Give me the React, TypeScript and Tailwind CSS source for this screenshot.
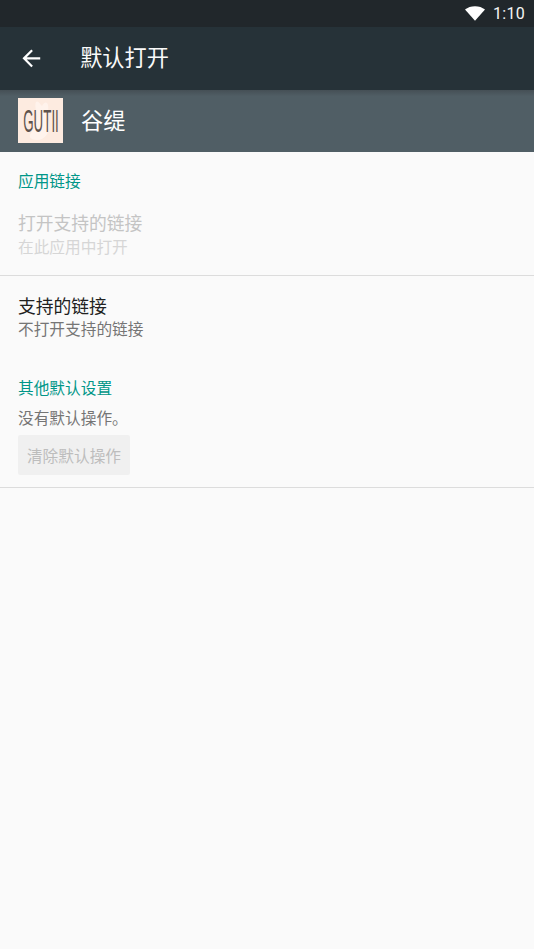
const FONT = "font-['Roboto','Noto_Sans_CJK_SC',sans-serif]";

function Wifi() {
  return (
    <svg width="20" height="15" viewBox="0 0 22 16" className="mr-2">
      <path d="M0 3.6C3 1.3 6.8 0 11 0s8 1.3 11 3.6L11 16z" fill="#fff" />
    </svg>
  );
}

function AppIcon() {
  return (
    <div className="relative flex h-[45px] w-[45px] items-center justify-center overflow-hidden bg-[#fdebe0]">
      <svg width="45" height="45" viewBox="0 0 45 45" className="absolute inset-0">
        <path d="M18 4c2-2 4 2 6 4 2-4 5-5 6-1 1 5-1 12 1 20 1 7-4 15-12 15-6 0-9-3-6-7 3-5 6-8 6-14 0-7-3-13-1-17z" fill="#fff3ec" />
      </svg>
      <span className="relative scale-x-[0.89] scale-y-[2.15] font-['Liberation_Sans',sans-serif] text-[15px] leading-[11px] whitespace-nowrap text-[#5f534c]">
        GUTII
      </span>
    </div>
  );
}

export default function App() {
  return (
    <div className={`${FONT} flex h-[949px] w-[534px] flex-col overflow-hidden bg-[#fafafa]`}>
      <div className="flex h-[27px] items-center justify-end bg-[#21272b]">
        <Wifi />
        <span className="mr-[9px] text-[16px] tracking-[0.3px] text-[#f5f5f5]">1:10</span>
      </div>
      <header className="flex h-[63px] items-center bg-[#263238]">
        <svg width="26.67" height="26.67" viewBox="0 0 24 24" className="ml-[17.5px]" fill="#fff">
          <path d="M20 11H7.83l5.59-5.59L12 4l-8 8 8 8 1.41-1.41L7.83 13H20z" />
        </svg>
        <h1 className="ml-9 text-[22.2px] leading-none text-[#fafafa]">默认打开</h1>
      </header>
      <div className="flex h-[62px] items-center bg-gradient-to-b from-[#454f55] from-0% via-[#505e65] via-10% to-[#505e65] pl-[18px]">
        <div className="mb-[2px]">
          <AppIcon />
        </div>
        <span className="ml-[18px] text-[22.2px] leading-none text-white">谷缇</span>
      </div>
      <section className="border-b border-[#dcdcdc] px-[18px] pb-[17px]">
        <h2 className="pt-5 text-[15.7px] leading-[20px] text-[#009688]">应用链接</h2>
        <p className="mt-[21px] text-[17.77px] leading-[22px] text-[#c4c4c4]">打开支持的链接</p>
        <p className="mt-[3px] text-[15.7px] leading-[20px] text-[#d6d6d6]">在此应用中打开</p>
      </section>
      <section className="px-[18px] pt-5">
        <p className="text-[17.77px] leading-[22px] text-[#212121]">支持的链接</p>
        <p className="mt-[2px] text-[15.7px] leading-[20px] text-[#757575]">不打开支持的链接</p>
      </section>
      <section className="border-b border-[#dcdcdc] px-[18px] pb-3">
        <h2 className="mt-[39px] text-[15.7px] leading-[20px] text-[#009688]">其他默认设置</h2>
        <p className="mt-[10px] text-[15.7px] leading-[20px] text-[#757575]">没有默认操作。</p>
        <button className="mt-[6px] block h-10 w-[112px] rounded-[2px] bg-[#f0f0f0] pt-[3px] text-center text-[15.7px] text-[#bdbdbd]">
          清除默认操作
        </button>
      </section>
    </div>
  );
}
